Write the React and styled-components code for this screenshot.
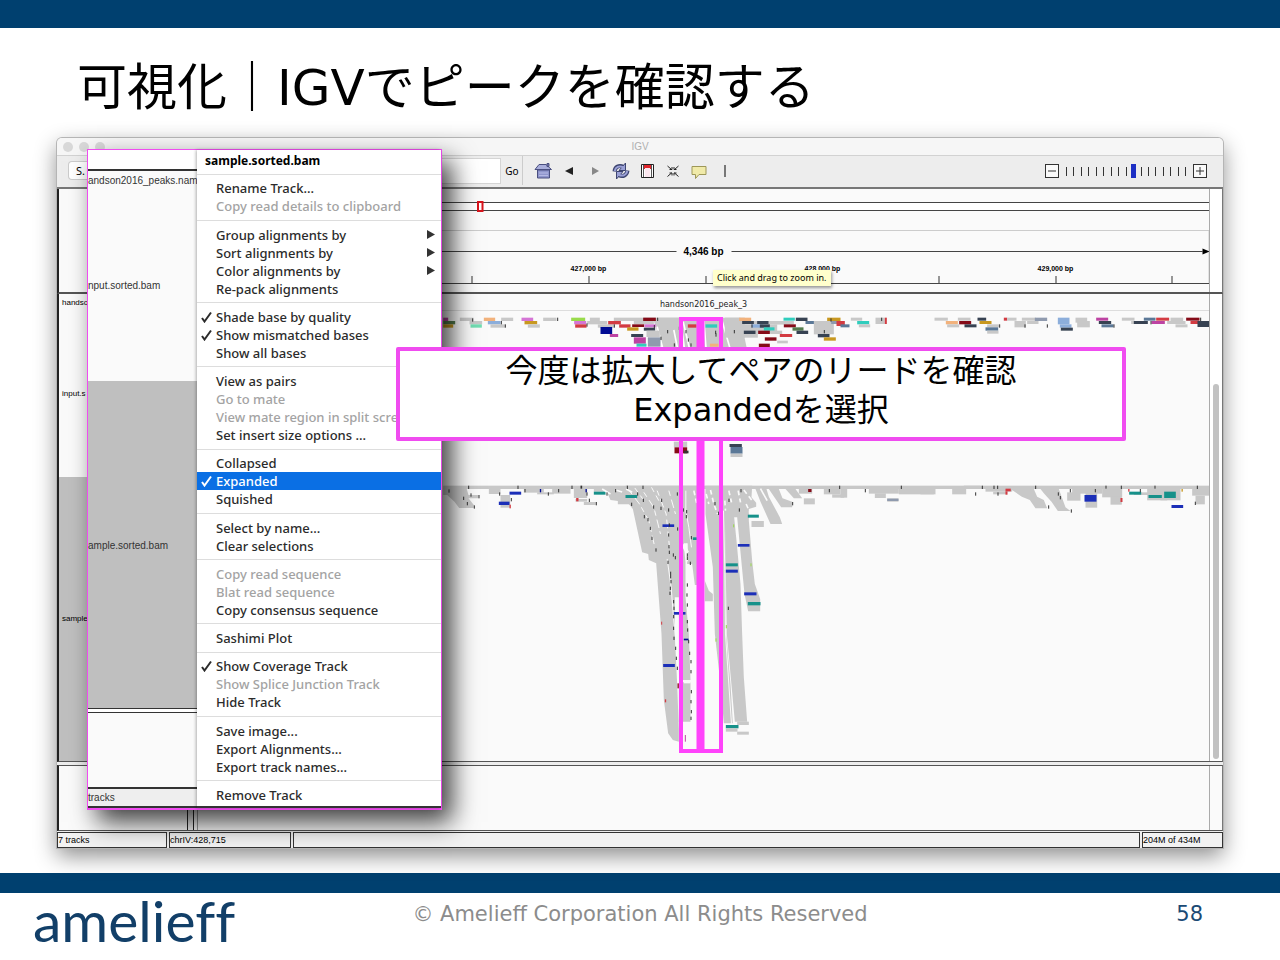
import React from "react";
import styled, { createGlobalStyle } from "styled-components";

const NAVY = "#00406f";
const PINK = "#f04cf0";
const UI = '"Noto Sans", "Open Sans", sans-serif';
const ARIAL = '"Liberation Sans", Arial, sans-serif';
const JP = '"DejaVu Sans", "Noto Sans CJK JP", sans-serif';

const Global = createGlobalStyle`
  * { box-sizing: border-box; }
  body { margin: 0; background: #fff; color: #000; font-family: ${UI}; }
  button, input, select { font: inherit; color: inherit; margin: 0; padding: 0; border: 0; background: none; }
`;

const Slide = styled.main`
  display: flex;
  flex-direction: column;
  min-height: 100vh;
  overflow: hidden;
`;
const Band = styled.div`
  height: ${(p) => p.$h}px;
  flex: none;
  background: ${NAVY};
`;
const Heading = styled.h1`
  margin: 0;
  height: 110px;
  padding: 28px 77px 0;
  font: 400 50px/64px ${JP};
  white-space: nowrap;
`;

/* application window */
const Window = styled.section`
  position: relative;
  display: flex;
  flex-direction: column;
  margin: 0 57px 25px;
  border-radius: 5px 5px 0 0;
  background: #ededed;
  box-shadow: 0 0 0 1px #b5b5b5, 0 8px 22px rgba(0, 0, 0, 0.45);
`;
const TitleBar = styled.header`
  display: flex;
  align-items: center;
  height: 18px;
  border-bottom: 1px solid #d2d2d2;
  border-radius: 5px 5px 0 0;
  background: #f6f6f6;
  padding: 0 6px;
`;
const Lights = styled.div`
  display: flex;
  gap: 6px;
  flex: 1;
`;
const Light = styled.i`
  width: 10px;
  height: 10px;
  border-radius: 50%;
  background: #d8d8d8;
`;
const WindowTitle = styled.span`
  font: 10px/16px ${ARIAL};
  color: #b0b0b0;
`;
const Spacer = styled.div`
  flex: 1;
`;
const Toolbar = styled.div`
  display: flex;
  align-items: center;
  height: 33px;
  border-bottom: 2px solid #777;
  padding: 0 16px 2px 0;
`;
const Locator = styled.div`
  display: flex;
  align-items: center;
  gap: 4px;
  width: 466px;
  height: 29px;
  margin-right: 7px;
  padding: 0 2px 0 12px;
  border-right: 1px solid #ccc;
  font-size: 11px;
`;
const Genome = styled.button`
  width: 100px;
  height: 17px;
  padding-left: 7px !important;
  text-align: left;
  border-radius: 3px;
  background: #fff !important;
  box-shadow: 0 0 0 1px #ccc;
`;
const Search = styled.input`
  flex: 1;
  height: 24px;
  background: #fff !important;
  box-shadow: 0 0 0 1px #d5d5d5;
`;
const Go = styled.button`
  width: 16px;
  line-height: 16px;
  font-size: 10px !important;
`;
const Tool = styled.button`
  display: grid;
  place-items: center;
  width: 26px;
  height: 24px;
`;
const ZoomButton = styled.button`
  width: 14px;
  height: 14px;
  display: grid;
  place-items: center;
  border: 1px solid #333 !important;
  background: #fafafa !important;
`;
const ZoomScale = styled.div`
  position: relative;
  width: 124px;
  height: 14px;
  margin: 0 5px;
  svg { display: block; }
`;
const Range = styled.input`
  position: absolute;
  inset: 0;
  width: 124px;
  height: 14px;
  appearance: none;
  &::-webkit-slider-thumb {
    appearance: none;
    width: 5px;
    height: 14px;
    background: #1d2fc4;
  }
`;

/* panes */
const Pane = styled.div`
  display: grid;
  grid-template-columns: 139px minmax(0, 1fr) 12px;
  height: ${(p) => p.$h}px;
  margin-bottom: ${(p) => p.$gap || 0}px;
  border-left: 2px solid #222;
  border-right: 1px solid #777;
  border-bottom: ${(p) => p.$line}px solid #555;
  ${(p) => p.$top && "border-top: 1px solid #555;"}
  background: #fafafa;
`;
const NameColumn = styled.div`
  display: flex;
  flex-direction: column;
  margin-right: 10px;
  border-right: 1px solid #222;
  box-shadow: 5px 0 0 #f4f4f4, 6px 0 0 #222;
`;
const TrackName = styled.div`
  display: flex;
  align-items: center;
  flex: ${(p) => p.$size} 0 0px;
  padding-left: 3px;
  background: ${(p) => (p.$on ? "#bfbfbf" : "transparent")};
  font: 8px/10px ${ARIAL};
`;
const DataColumn = styled.div`
  position: relative;
  border-left: 1px solid #999;
  margin-left: -1px;
  border-right: 1px solid #aaa;
  overflow: hidden;
  svg { display: block; width: 100%; height: 100%; }
`;
const Gutter = styled.div`
  background: #fff;
  padding: ${(p) => p.$pt || 0}px 2px 2px 3px;
`;
const Thumb = styled.div`
  width: 6px;
  height: 100%;
  border-radius: 3px;
  background: #c2c2c2;
`;
const Hint = styled.span`
  position: absolute;
  left: 515px;
  top: 81px;
  padding: 0 4px;
  font-size: 9px;
  line-height: 16px;
  white-space: nowrap;
  background: #ffffcc;
  box-shadow: 1px 2px 3px rgba(0, 0, 0, 0.4);
`;
const StatusBar = styled.div`
  display: grid;
  grid-template-columns: 110px 122px minmax(0, 1fr) 81px;
  gap: 2px;
  height: 16px;
  margin-top: 1px;
`;
const Status = styled.span`
  border: 1px solid #333;
  background: #f2f2f2;
  font: 9px/14px ${ARIAL};
  white-space: nowrap;
`;

/* enlarged context menu */
const Inset = styled.div`
  position: absolute;
  left: 30px;
  top: 11px;
  display: grid;
  grid-template-columns: 109px 1fr;
  width: 355px;
  height: 661px;
  border: 1px solid ${PINK};
  border-bottom-width: 2px;
  background: #fff;
  box-shadow: 10px 12px 24px rgba(0, 0, 0, 0.75);
`;
const Strip = styled.div`
  display: flex;
  flex-direction: column;
  font: 10px/12px ${ARIAL};
  color: #333;
  border-bottom: 2px solid #333;
`;
const StripCell = styled.div`
  height: ${(p) => p.$h}px;
  padding-top: ${(p) => p.$pt || 0}px;
  background: ${(p) => p.$bg || "#fafafa"};
  border-bottom: ${(p) => p.$line || 0}px solid #333;
  white-space: nowrap;
`;
const Menu = styled.div`
  display: flex;
  flex-direction: column;
  padding: 2px 0 2px;
  border-bottom: 2px solid #333;
  box-shadow: -1px 0 3px rgba(0, 0, 0, 0.3);
  background: #fff;
`;
const MenuTitle = styled.strong`
  padding-left: 8px;
  font-size: 12px;
  line-height: 17px;
`;
const Rule = styled.hr`
  flex: 1;
  width: 100%;
  margin: 0;
  border: 0;
  background: linear-gradient(#ddd, #ddd) center / 100% 1px no-repeat;
`;
const MenuItem = styled.button`
  display: grid;
  grid-template-columns: 16px 1fr 8px;
  align-items: center;
  height: 18px;
  padding: 0 6px 0 3px !important;
  text-align: left;
  font-size: 13px !important;
  font-weight: 500 !important;
  line-height: 18px !important;
  white-space: nowrap;
  color: ${(p) => (p.$on ? "#fff" : p.disabled ? "#a3a3a3" : "#2b2b2b")} !important;
  background: ${(p) => (p.$on ? "#0a6fe4" : "none")} !important;
`;
const Callout = styled.p`
  position: absolute;
  left: 339px;
  right: 97px;
  top: 209px;
  height: 94px;
  margin: 0;
  padding-top: 1px;
  border: 4px solid ${PINK};
  border-radius: 2px;
  background: #fff;
  text-align: center;
  font: 32px/39px ${JP};
`;

const Footer = styled.footer`
  display: grid;
  grid-template-columns: 1fr auto 1fr;
  padding: 0 33px;
  height: 67px;
  font: 21px/42px "DejaVu Sans", sans-serif;
`;
const Logo = styled.span`
  font: 400 57px/54px Lato, sans-serif;
  font-variant-ligatures: none;
  color: #123f68;
`;
const Copyright = styled.span`
  color: #8c8c8c;
`;
const PageNumber = styled.span`
  padding-right: 44px;
  text-align: right;
  color: #1b4a75;
`;

const menu = [
  ["Rename Track...", "-Copy read details to clipboard"],
  [">Group alignments by", ">Sort alignments by", ">Color alignments by", "Re-pack alignments"],
  ["+Shade base by quality", "+Show mismatched bases", "Show all bases"],
  ["View as pairs", "-Go to mate", "-View mate region in split screen", "Set insert size options ..."],
  ["Collapsed", "*Expanded", "Squished"],
  ["Select by name...", "Clear selections"],
  ["-Copy read sequence", "-Blat read sequence", "Copy consensus sequence"],
  ["Sashimi Plot"],
  ["+Show Coverage Track", "-Show Splice Junction Track", "Hide Track"],
  ["Save image...", "Export Alignments...", "Export track names..."],
  ["Remove Track"],
];

function Item({ label }) {
  const flag = "-+*>".includes(label[0]) ? label[0] : "";
  return (
    <MenuItem type="button" disabled={flag === "-"} $on={flag === "*"}>
      <span>
        {(flag === "+" || flag === "*") && (
          <svg width="12" height="12" viewBox="0 0 12 12" display="block">
            <path d="M2 7 4.500 10.500 11 1.500" fill="none" stroke="currentColor" strokeWidth="2" />
          </svg>
        )}
      </span>
      <span>{flag ? label.slice(1) : label}</span>
      {flag === ">" && (
        <svg width="8" height="9" viewBox="0 0 8 9">
          <path d="M0 0 8 4.500 0 9Z" fill="#333" />
        </svg>
      )}
    </MenuItem>
  );
}

const icons = {
  Home: (
    <g stroke="#4a4f80" strokeWidth="1">
      <path d="M3.500 8h12v8h-12z" fill="#8f95cc" />
      <path d="M1 7.500 5 2.500h7l5.500 5z" fill="#a9aedb" />
      <path d="M13 1.500h2v3h-2z" fill="#777bb0" />
      <path d="M5 11h9M5 13.500h9" stroke="#b5b9e5" />
    </g>
  ),
  Back: <path d="M13 5v8L5 9z" fill="#222" />,
  Forward: <path d="M6 5v8l7-4z" fill="#888" />,
  Refresh: (
    <g fill="none" strokeLinejoin="round">
      <path d="M2.500 9.500C3 5 7 2.500 11.500 5" stroke="#3d4470" strokeWidth="4" />
      <path d="M15.500 8.500C15 13 11 15.500 6.500 13" stroke="#3d4470" strokeWidth="4" />
      <path d="M13.500 1v7.500H7z" fill="#9aa0d6" stroke="#3d4470" />
      <path d="M4.500 17V9.500H11z" fill="#9aa0d6" stroke="#3d4470" />
      <path d="M2.700 9C3.500 5 7 3 11.800 5.500M15.300 9C14.500 13 11 15 6.200 12.500" stroke="#9aa0d6" strokeWidth="2" />
    </g>
  ),
  Region: (
    <g>
      <path d="M3.500 2.500h12v13h-12z" fill="#fff" stroke="#222" />
      <path d="M6 3h7v4H6z" fill="#e0262c" />
      <path d="M5.500 3v12M13.500 3v12" stroke="#555" />
      <path d="M7 6h5v9H7z" fill="#fbe6ee" />
    </g>
  ),
  Fit: (
    <path
      d="M3.500 4l4 3.500M14.500 4l-4 3.500M3.500 14.500l4-3.500M14.500 14.500l-4-3.500M5.500 7.500H8V5M10 5v2.500h2.500M5.500 11H8v2.500M10 13.500V11h2.500"
      fill="none"
      stroke="#222"
    />
  ),
  Comment: <path d="M2 4.500h14v8H9l-3.500 4v-4H2z" fill="#f0eaa9" stroke="#9d9758" />,
  Separator: <path d="M9 3v12" stroke="#777" strokeWidth="2" />,
};

const C = {
  g: "#c8c8c8", w: "#fafafa", r: "#d33b42", d: "#850b18", o: "#f2b27c", y: "#c89820",
  t: "#30cdbd", k: "#374252", b: "#8caedb", s: "#5b7897", p: "#bd43a2", v: "#d475d5",
  n: "#000b93", u: "#1c2fb8", e: "#16918a", l: "#99db4b", m: "#71ddb2", x: "#333", h: "#8f9aae", f: "#547c4d",
};

/* reads: x, y, width, height, colour key; three units to a pixel */
const inputReads = `8,563,15,10,p 8,573,36,10,f 8,583,30,10,y 58,563,41,10,g 87,573,38,10,g 90,583,34,10,m
130,563,34,10,o 142,573,38,10,b 150,583,44,10,g 182,563,36,10,g 243,563,35,10,v 252,573,38,10,y 262,583,36,10,g
308,563,40,10,g 392,563,42,10,l 401,573,36,10,v 404,583,34,10,r 448,563,30,10,g 440,573,60,10,g 472,583,50,10,g
480,591,35,21,n 520,563,240,10,g 503,573,38,10,r 536,583,34,10,r 580,573,60,10,g 575,583,36,8,d 560,592,34,10,y
608,563,38,10,d 612,583,34,9,v 610,593,34,9,k 508,612,25,9,p 572,612,36,9,k 580,622,36,19,p 588,641,30,9,t
618,602,40,19,g 622,622,38,28,h 742,583,26,10,r 795,583,35,10,t 808,641,26,9,o 853,563,60,60,g
860,573,200,10,g 862,583,90,40,g 950,583,60,28,g 896,563,36,10,o 905,573,35,9,k 933,583,34,10,b 910,602,35,10,k 950,573,34,9,k
958,583,30,10,k 970,592,32,10,t 953,602,35,10,d 973,622,35,10,d 955,641,33,10,d 990,602,35,10,g 1010,632,32,8,g
1029,563,34,9,t 1000,573,38,10,g 1030,583,36,9,d 1056,592,33,10,f 1068,602,35,10,k 1066,563,35,10,k 1095,573,37,9,s
1018,612,37,9,r 1120,573,60,40,g 1132,612,35,10,k 1150,622,36,10,y 1160,563,40,10,y 1172,573,30,9,h 1188,573,25,15,r
1200,583,27,9,s 1231,563,34,9,g 1250,573,36,10,t 1255,583,34,9,g 1305,563,28,19,g 1333,563,6,19,r
1482,563,40,9,g 1552,563,38,9,g 1516,573,36,10,o 1520,583,36,9,g 1556,573,36,10,d 1572,583,36,9,k
1611,563,26,9,k 1617,573,36,9,y 1640,583,36,9,g 1635,592,38,10,s 1640,602,34,9,g 1690,563,10,9,r 1700,563,28,9,g
1722,573,34,19,g 1744,563,42,9,g 1760,573,34,9,g 1783,563,37,10,h 1852,563,35,20,b 1858,583,35,10,b 1861,593,36,9,k
1905,563,35,15,g 1910,573,38,19,g 1967,563,36,9,p 1975,573,37,9,k 1983,583,36,9,s 2044,563,38,9,g
2072,573,24,9,g 2080,573,42,9,k 2110,563,35,9,s 2147,563,39,9,r 2133,573,40,9,p 2190,563,38,10,g 2180,573,55,9,g
2205,583,36,9,g 2237,563,40,9,d 2250,573,30,9,r 2271,573,40,18,k`;
const peakReads = `8,167,2302,10,g 180,195,29,38,g 145,177,35,15,g 250,177,60,11,g 290,187,50,6,g 335,177,55,14,g 400,177,40,27,g
405,207,35,8,g 430,216,36,9,g 460,177,40,8,g 207,185,35,9,u 175,215,32,10,u 460,185,35,9,e
700,35,40,17,g 702,52,38,18,d 730,62,14,8,x 867,42,37,9,k 870,51,36,20,s 870,71,36,10,g
1075,177,40,14,g 1090,205,33,18,g 1150,177,50,16,g 1175,193,36,10,g 1200,177,20,26,g
1285,177,90,14,g 1303,190,33,14,g 1340,205,34,10,g 1375,177,110,16,g 1440,187,40,6,g 1535,177,42,16,g
1570,167,50,8,g 1635,177,80,8,g 1658,185,42,8,g 1880,187,40,25,g 1895,177,90,14,g 1935,187,35,46,g 1985,177,60,25,g
2010,200,34,24,g 2080,187,100,8,g 2120,177,60,34,g 2160,177,60,34,g 2255,177,55,20,g 2265,197,28,26,g
1932,195,36,20,u 2193,225,35,9,u 2066,185,36,9,e 2124,195,40,9,e 2171,185,35,19,e 1340,206,34,7,h
1695,176,16,8,r 1695,184,6,10,r 2040,204,6,12,r 1103,177,10,9,d 407,204,7,10,r 207,224,4,11,r 2063,177,4,8,r 2223,177,4,8,y
435,177,4,10,n 298,177,4,10,n 420,167,5,9,x 1995,167,3,9,x 2142,167,3,9,x`;
const deepBars = `555,195,35,9,e 922,254,33,9,e 933,273,37,18,g 666,283,35,8,u 757,322,15,8,e 892,342,35,8,u 856,400,36,9,e
856,419,36,9,u 911,487,37,9,u 922,516,38,10,e 700,546,35,8,u 668,702,35,9,u 730,626,14,5,n
856,885,38,10,e 856,895,35,10,g 890,875,35,10,g 890,905,35,9,g 730,753,20,7,w
878,283,3,9,l 930,400,3,9,l 856,585,3,10,l 825,625,3,10,l 662,575,3,9,r 673,808,4,9,r 711,760,4,15,d 733,915,3,20,p`;

const ticks = `24,178 83,167 90,190 68,200 114,195 79,216 100,226 176,187 231,167 211,204 252,177 322,187 353,177 393,167
445,206 466,216 438,187 498,187 524,177 559,167 606,167 590,187 572,218 607,206 610,255 621,264 638,226 662,206 660,230
683,235 709,187 628,290 633,320 645,355 685,280 683,310 684,345 685,362 697,370 703,378 710,292 727,235 736,255 737,240
751,318 739,370 739,380 748,395 681,392 689,435 689,425 690,450 688,470 687,485 698,510 699,530 739,460 738,490 739,520
698,555 739,570 862,530 822,216 833,245 864,206 895,235 900,177 1055,216 1165,177 1196,167 1381,167 1273,177 1659,167
1624,167 1670,167 1604,187 1671,187 1858,198 1823,226 1891,238 1784,167 1888,177 1963,177 1852,187 2041,167 2098,177 2269,167 2263,215
698,590 740,595 699,620 743,630 704,650 746,665 706,680 750,690 709,710 750,720 751,780 750,810 751,840 750,860`;
const upperTicks = `95,565 181,573 193,583 350,563 438,580 650,563 520,583 640,585 715,590 660,620 680,600 700,640 735,600 742,625
750,640 824,602 825,610 1150,600 1170,565 1322,563 1676,583 1752,583 1819,583 2019,583 2279,563 933,583 880,600 2130,573`;

const parse = (s) => s.trim().split(/\s+/).map((r) => r.split(","));
const Reads = ({ data }) =>
  parse(data).map(([x, y, w, h, c], i) => <rect key={i} x={x} y={y} width={w} height={h} fill={C[c]} />);
const Marks = ({ data }) => parse(data).map(([x, y], i) => <rect key={i} x={x} y={y} width="3" height="10" fill="#333" />);

function Alignments() {
  return (
    <svg viewBox="196 294 1014 467" preserveAspectRatio="xMidYMin slice">
      <path d="M196 310.500H1210" stroke="#ddd" />
      <text x="703" y="307" textAnchor="middle" fontFamily="DejaVu Sans" fontSize="8" fill="#222">
        handson2016_peak_3
      </text>
      <g transform="translate(440 130) scale(.33333)">
        <path
          fill={C.g}
          d="M640 573H712L730 660H668zM722 565H900L920 660H735zM1020 573 1050 583H1030zM655 563H900V590H655z"
        />
        <path d="M728 575 748 660M790 570 797 660M845 573 870 660M893 573 910 620M650 590 668 660M700 600 712 660" stroke="#fff" strokeWidth="5" />
        <Reads data={inputReads} />
        <Marks data={upperTicks} />
      </g>
      <g transform="translate(440 430) scale(.33333)">
        <Reads data={peakReads} />
        <g fill={C.g}>
          <path d="M8 175H78L84 195H114V205H84L100 225V234H56L42 215 20 195H8z" />
          <path d="M495 177 510 210 532 213V223H570V177z" />
          <path d="M945 177 960 215 990 282H1025L1018 262 985 200 978 177zM985 177 1022 232H1055V215L1026 205 1015 177z" />
          <path d="M1035 177H1065L1085 205H1060z" />
          <path d="M1710 177H1780L1790 200 1810 210 1820 235H1785L1768 210 1744 200zM1800 177H1855L1875 232 1890 243H1852L1833 215 1810 190z" />
        </g>
        <g transform="translate(555 162)" fill={C.g}>
          <path d="M0 5 10 60 22 75 50 205 68 210 70 228 92 238 108 450 115 648 128 748 142 768 160 773V735L155 600 148 450V340H160V713H195V595H160V588H195L190 450 180 340V235L172 150V5z" />
          <path d="M165 5H240V90L262 250 268 450 285 600 295 718H322L315 600 302 450 298 100 304 450 328 713H365L355 580 350 450 345 300 334 180 326 100H335L357 330 368 382H404V345L388 300 380 230 370 110V75L392 68V56L378 40 380 5z" />
          <path d="M172 5H216V303H208L200 240H185V178H172z" />
          <path d="M238 290 250 320 262 330V352H238z" />
        </g>
        <g stroke="#fafafa" strokeWidth="3" fill="none" transform="translate(555 162)">
          <path d="M10 18 42 60 70 110 88 190M55 25 85 70 105 150M95 20 122 90 132 190M130 20 150 90M28 12 52 45M78 10 100 50" strokeDasharray="16 12 26 10" />
          <path d="M181 20V80L190 130 198 190M185 178 186 232M125 225 137 310 144 400 150 460 160 600" />
          <path d="M172 182 186 206" strokeWidth="10" />
          <path d="M255 18 265 60 276 90M242 30 250 60M298 50 300 80M310 20 318 55M338 20 345 55M355 18 380 50M362 60 375 90M205 20 214 60" strokeDasharray="14 10" strokeWidth="5" />
          <path d="M2 15 20 25M-70 15 -45 30M-30 18 -10 24M405 14 425 50" strokeWidth="5" />
          <path d="M294 80 298 260 300 450 318 720" />
        </g>
        <Reads data={deepBars} />
        <Marks data={ticks} />
      </g>
      <path d="M696 317H704V752H696z" fill="#ff43fb" />
      <path d="M680.500 319H720.500V751H680.500z" fill="none" stroke="#ff43fb" strokeWidth="4" />
    </svg>
  );
}

function Ruler() {
  return (
    <svg viewBox="196 189 1014 103" preserveAspectRatio="xMidYMin slice">
      <path d="M196 202H1210V210H196z" fill="#fff" />
      <path d="M196 202.500H1210M196 210.500H1210M196 283.500H1210M196 251.500H676M731 251.500H1202" stroke="#444" />
      <path d="M196 230.500H1208.500V283" stroke="#ccc" fill="none" />
      <path d="M1202 248.500 1209 251.500 1202 254.500z" />
      <path d="M471.500 276v7M588.500 276v7M705.500 276v7M821.500 276v7M938.500 276v7M1055.500 276v7M1171.500 276v7" stroke="#333" />
      <path d="M477.500 202h4.500v9h-4.500z" fill="#fff" stroke="#d8141c" strokeWidth="2" />
      <g fontFamily="Liberation Sans" fontWeight="700" textAnchor="middle">
        <text x="703" y="255" fontSize="10">4,346 bp</text>
        <g fontSize="7">
          <text x="588" y="271">427,000 bp</text>
          <text x="822" y="271">428,000 bp</text>
          <text x="1055" y="271">429,000 bp</text>
        </g>
      </g>
    </svg>
  );
}

export default function App() {
  return (
    <Slide>
      <Global />
      <Band $h={28} />
      <Heading>可視化｜IGVでピークを確認する</Heading>
      <Window>
        <TitleBar>
          <Lights>
            <Light />
            <Light />
            <Light />
          </Lights>
          <WindowTitle>IGV</WindowTitle>
          <Spacer />
        </TitleBar>
        <Toolbar>
          <Locator>
            <Genome type="button">S.</Genome>
            <Search type="text" aria-label="Locus" />
            <Go type="button">Go</Go>
          </Locator>
          {Object.entries(icons).map(([name, art]) => (
            <Tool key={name} type="button" aria-label={name}>
              <svg width="18" height="18" viewBox="0 0 18 18">{art}</svg>
            </Tool>
          ))}
          <Spacer />
          <ZoomButton type="button" aria-label="Zoom out">
            <svg width="8" height="8"><path d="M0 4h8" stroke="#333" /></svg>
          </ZoomButton>
          <ZoomScale>
            <svg width="124" height="14">
              {Array.from({ length: 17 }, (_, i) => (
                <rect key={i} x={Math.round(2 + i * 7.45)} y="3" width="1" height="9" fill="#333" />
              ))}
            </svg>
            <Range type="range" min="0" max="16" defaultValue="9" aria-label="Zoom level" />
          </ZoomScale>
          <ZoomButton type="button" aria-label="Zoom in">
            <svg width="8" height="8"><path d="M0 4h8M4 0v8" stroke="#333" /></svg>
          </ZoomButton>
        </Toolbar>

        <Pane $h={105} $line={2}>
          <NameColumn />
          <DataColumn>
            <Ruler />
            <Hint>Click and drag to zoom in.</Hint>
          </DataColumn>
          <Gutter />
        </Pane>
        <Pane $h={468} $line={1} $gap={3}>
          <NameColumn>
            <TrackName $size={17}>handso</TrackName>
            <TrackName $size={166}>input.s</TrackName>
            <TrackName $size={284} $on>sample</TrackName>
          </NameColumn>
          <DataColumn>
            <Alignments />
          </DataColumn>
          <Gutter $pt={90}>
            <Thumb />
          </Gutter>
        </Pane>
        <Pane $h={66} $line={1} $top>
          <NameColumn />
          <DataColumn />
          <div />
        </Pane>
        <StatusBar>
          <Status>7 tracks</Status>
          <Status>chrIV:428,715</Status>
          <Status />
          <Status>204M of 434M</Status>
        </StatusBar>

        <Inset>
          <Strip>
            <StripCell $h={21} $line={2} $bg="#fff" />
            <StripCell $h={105} $pt={4}>andson2016_peaks.nam</StripCell>
            <StripCell $h={105} $pt={4}>nput.sorted.bam</StripCell>
            <StripCell $h={328} $pt={159} $line={1} $bg="#bfbfbf">ample.sorted.bam</StripCell>
            <StripCell $h={4} $line={1} $bg="#fff" />
            <StripCell $h={76} $line={2} />
            <StripCell $h={17} $pt={3} $bg="#eee">tracks</StripCell>
          </Strip>
          <Menu>
            <MenuTitle>sample.sorted.bam</MenuTitle>
            {menu.map((group) => (
              <React.Fragment key={group[0]}>
                <Rule />
                {group.map((label) => (
                  <Item key={label} label={label} />
                ))}
              </React.Fragment>
            ))}
          </Menu>
        </Inset>
        <Callout>
          今度は拡大してペアのリードを確認
          <br />
          Expandedを選択
        </Callout>
      </Window>
      <Band $h={20} />
      <Footer>
        <Logo>amelieff</Logo>
        <Copyright>© Amelieff Corporation All Rights Reserved</Copyright>
        <PageNumber>58</PageNumber>
      </Footer>
    </Slide>
  );
}
